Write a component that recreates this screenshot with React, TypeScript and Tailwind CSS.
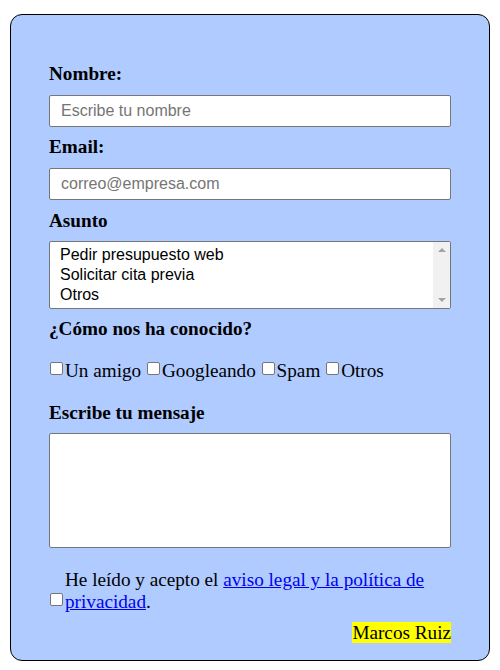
import React from "react";

const inputCls =
  "block w-full h-[32px] border border-[#767676] rounded-[2px] bg-white px-[11px] text-[16px] font-['Liberation_Sans',Arial,sans-serif] text-black placeholder:text-[#757575] outline-none";

const labelCls = "block font-bold leading-[22px]";

const checkCls =
  "m-0 ml-[1px] mr-[2px] inline-block h-[13px] w-[13px] appearance-none rounded-[2px] border border-[#767676] bg-white align-[2px]";

const sources = ["Un amigo", "Googleando", "Spam", "Otros"];
const subjects = ["Pedir presupuesto web", "Solicitar cita previa", "Otros"];

export default function App() {
  return (
    <div className="min-h-[670px] bg-white pt-[14px] pl-[10px] font-['Liberation_Serif','Times_New_Roman',serif] text-[19.2px] text-black">
      <form className="w-[480px] rounded-[12px] border border-black bg-[#b0cbff] px-[38px] pt-[48px] pb-[16px]">
        <label className={labelCls}>Nombre:</label>
        <input type="text" placeholder="Escribe tu nombre" className={`${inputCls} mt-[10px]`} />

        <label className={`${labelCls} mt-[9px]`}>Email:</label>
        <input type="email" placeholder="correo@empresa.com" className={`${inputCls} mt-[10px] h-[31px]`} />

        <label className={`${labelCls} mt-[10px]`}>Asunto</label>
        {/* listbox with classic scrollbar */}
        <div className="mt-[9px] flex h-[68px] w-full overflow-hidden rounded-[2px] border border-[#767676] bg-white">
          <div className="flex-1 px-[10px] py-[3px] font-['Liberation_Sans',Arial,sans-serif] text-[16px] leading-[20px]">
            {subjects.map((s) => (
              <div key={s}>{s}</div>
            ))}
          </div>
          <div className="flex w-[17px] flex-col items-center justify-between bg-[#f1f1f1] py-[6px]">
            <span className="h-0 w-0 border-x-[4px] border-b-[4px] border-x-transparent border-b-[#a3a3a3]" />
            <span className="h-0 w-0 border-x-[4px] border-t-[4px] border-x-transparent border-t-[#a3a3a3]" />
          </div>
        </div>

        <p className={`${labelCls} mt-[9px]`}>¿Cómo nos ha conocido?</p>

        <div className="mt-[20px] leading-[22px]">
          {sources.map((s, i) => (
            <React.Fragment key={s}>
              <label>
                <input type="checkbox" className={checkCls} />
                {s}
              </label>
              {i < sources.length - 1 ? " " : null}
            </React.Fragment>
          ))}
        </div>

        <label className={`${labelCls} mt-[20px]`}>Escribe tu mensaje</label>
        <textarea className="mt-[9px] block h-[115px] w-full resize-none rounded-[2px] border border-[#767676] bg-white p-[2px] font-['Liberation_Mono',monospace] text-[13px] outline-none" />

        <div className="mt-[21px] leading-[22px]">
          <input type="checkbox" className={checkCls} />
          <span className="inline-block w-[380px]">
            He leído y acepto el{" "}
            <a href="#" className="text-[#0000ee] underline">
              aviso legal y la política de privacidad
            </a>
            .
          </span>
        </div>

        <div className="mt-[9px] text-right leading-[22px]">
          <span className="bg-[#ffff00]">Marcos Ruiz</span>
        </div>
      </form>
    </div>
  );
}
